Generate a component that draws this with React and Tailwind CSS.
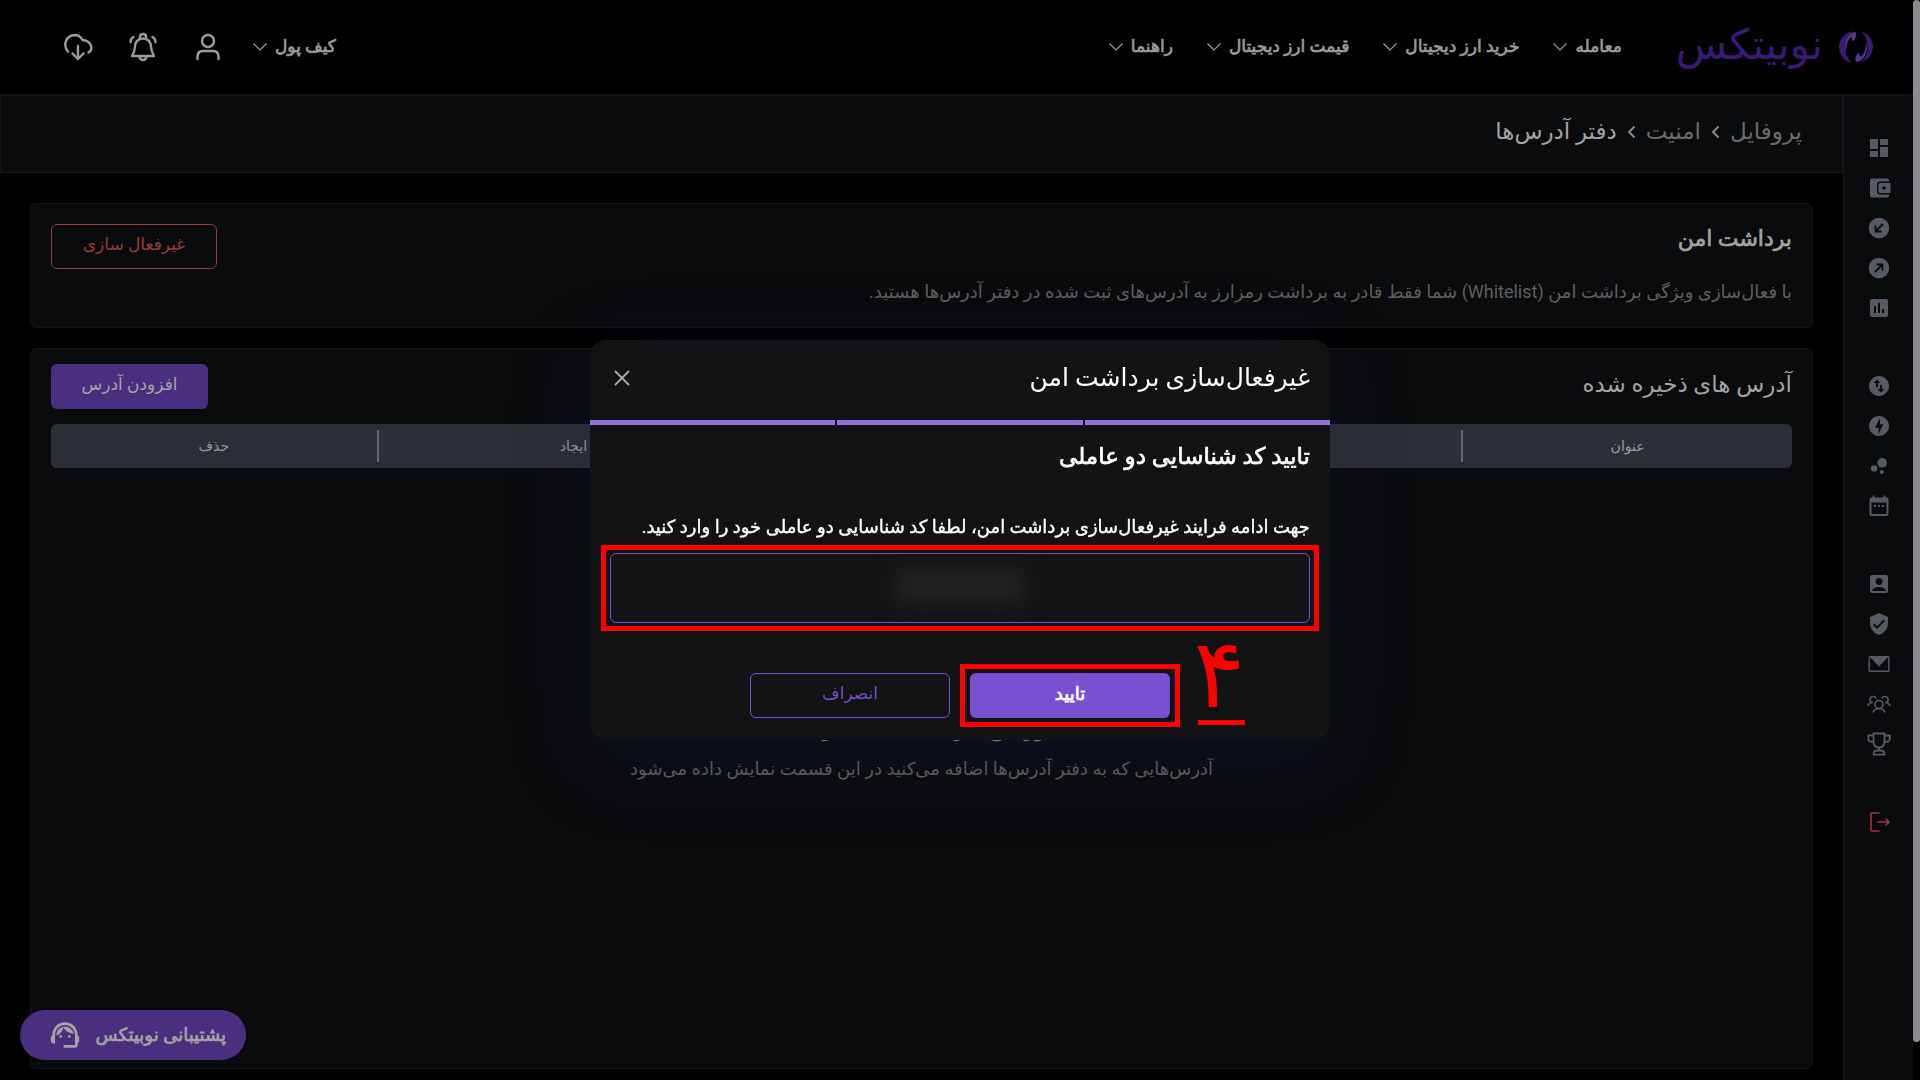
import React from 'react';
import {
  MdDashboard,
  MdAssessment,
  MdSwapVerticalCircle,
  MdOfflineBolt,
  MdBubbleChart,
  MdAccountBox,
  MdVerifiedUser,
  MdSupportAgent,
} from 'react-icons/md';

const menuItems = ['معامله', 'خرید ارز دیجیتال', 'قیمت ارز دیجیتال', 'راهنما'];

const columns = [
  { label: 'عنوان', width: 'w-[19%]' },
  { label: 'آدرس', width: 'w-[19%]' },
  { label: 'شبکه', width: 'w-[19%]' },
  { label: 'تاریخ ایجاد', width: 'w-[24.3%]' },
  { label: 'حذف', width: 'w-[18.7%]' },
];

const Chevron = () => (
  <svg width="14" height="8" viewBox="0 0 14 8" fill="none" stroke="currentColor" strokeWidth="1.2">
    <path d="M0.5 0.5L7 7L13.5 0.5" />
  </svg>
);

const Crumb = () => (
  <svg width="9" height="14" viewBox="0 0 9 14" fill="none" stroke="#8f8f8f" strokeWidth="1.8">
    <path d="M7.500 1.500L2 7L7.500 12.500" />
  </svg>
);

const LogoMark = () => (
  <svg width="34" height="32" viewBox="0 0 34 32">
    <path d="M14 0C5 2 0 9 0 16c0 7 5 14 13 16C8 27 6 22 6 16C6 9 9 4 14 0Z" fill="#391a76" />
    <path d="M22 0c8 3 12 9 12 16c0 7-5 13-12 15.500C27 27 28.500 22 28.500 16C28.500 9 26 4 22 0Z" fill="#391a76" />
    <path d="M6.500 22C4.500 10 9 1 16.500 1c1.500 4-.5 8-3 9.500c0-2-.5-4-2-4C8.500 9 7 15 6.500 22Z" fill="#573794" />
    <path d="M27.500 10c2 12-3 21-10.500 21c-1.500-4 .5-8 3-9.500c0 2 .5 4 2 4C25.500 23 27 17 27.500 10Z" fill="#573794" />
  </svg>
);

const CloudIcon = () => (
  <svg width="30" height="30" viewBox="0 0 30 30" fill="none" stroke="currentColor" strokeWidth="2.400" strokeLinecap="round" strokeLinejoin="round">
    <path d="M5 19.500C-0.500 13 3 3.500 11.500 3c4 0 6.500 2 8 5C28 8.500 31 17 25.500 20.500" />
    <path d="M15 14v13M9.500 21.500L15 27l5.500-5.500" />
  </svg>
);

const BellIcon = () => (
  <svg width="30" height="30" viewBox="0 0 30 30" fill="none" stroke="currentColor" strokeWidth="2.400" strokeLinecap="round" strokeLinejoin="round">
    <path d="M15 6.500c-5 0-8 3.500-8 8c0 4-1 6-3 9.500h22c-2-3.500-3-5.500-3-9.500c0-4.500-3-8-8-8Z" />
    <path d="M12 7V5c0-4 6-4 6 0v2M11.500 25c1 4 6 4 7 0M2.500 10c0-2.500 1-4 3-5M27.500 10c0-2.500-1-4-3-5" />
  </svg>
);

const UserIcon = () => (
  <svg width="30" height="30" viewBox="0 0 30 30" fill="none" stroke="currentColor" strokeWidth="2.500" strokeLinecap="round">
    <circle cx="15" cy="9" r="6" />
    <path d="M4.500 27v-2c0-4 2-6 5.500-6h10c3.500 0 5.500 2 5.500 6v2" />
  </svg>
);

const WalletIcon = () => (
  <svg width="24" height="24" viewBox="0 0 24 24" fill="currentColor">
    <path d="M5 2.500h15a2 2 0 0 1 2 2v1h-9a3 3 0 0 0-3 3v7a3 3 0 0 0 3 3h9v1a2 2 0 0 1-2 2H5a2 2 0 0 1-2-2v-15a2 2 0 0 1 2-2Z" />
    <path fillRule="evenodd" d="M13 7h10.500v10H13a1.500 1.500 0 0 1-1.500-1.500v-7A1.500 1.500 0 0 1 13 7Zm4 3.300a1.700 1.700 0 1 0 0 3.400a1.700 1.700 0 0 0 0-3.400Z" />
  </svg>
);

const DepositIcon = () => (
  <svg width="24" height="24" viewBox="0 0 24 24">
    <circle cx="12" cy="12" r="10.300" fill="currentColor" />
    <path d="M16 8l-7 7M8.500 9.500v6h6" fill="none" stroke="#0a0b0d" strokeWidth="1.800" />
  </svg>
);

const WithdrawIcon = () => (
  <svg width="24" height="24" viewBox="0 0 24 24">
    <circle cx="12" cy="12" r="10.300" fill="currentColor" />
    <path d="M8 16l7-7M9.500 8.500h6v6" fill="none" stroke="#0a0b0d" strokeWidth="1.800" />
  </svg>
);

const CalendarIcon = () => (
  <svg width="24" height="24" viewBox="0 0 24 24" fill="currentColor">
    <path fillRule="evenodd" d="M5.500 1.500h2v2h9v-2h2v2h1a2 2 0 0 1 2 2V20a2 2 0 0 1-2 2h-15a2 2 0 0 1-2-2V5.500a2 2 0 0 1 2-2h1Zm-1 7V20h15V8.500Z" />
    <path d="M7 11h2v2H7zM11 11h2v2h-2zM15 11h2v2h-2z" />
  </svg>
);

const MailIcon = () => (
  <svg width="24" height="24" viewBox="0 0 24 24">
    <rect x="2.200" y="4.700" width="19.600" height="14.600" rx="0.800" fill="none" stroke="currentColor" strokeWidth="1.400" />
    <path d="M3 5h18l-9 9.500Z" fill="currentColor" />
  </svg>
);

const GroupIcon = () => (
  <svg width="24" height="24" viewBox="0 0 24 24" fill="none" stroke="currentColor" strokeWidth="1.600">
    <circle cx="12" cy="12.500" r="4" />
    <path d="M6 20.500c1-3 3-4 6-4s5 1 6 4" />
    <path d="M4.500 10.500a3.200 3.200 0 1 1 4.500-4M1 14c.5-2 2-3.500 5-3.500M19.500 10.500a3.200 3.200 0 1 0-4.500-4M23 14c-.5-2-2-3.500-5-3.500" />
  </svg>
);

const TrophyIcon = () => (
  <svg width="24" height="24" viewBox="0 0 24 24" fill="none" stroke="currentColor" strokeWidth="1.800">
    <path d="M6.500 1.500h11V9c0 4-2 6.500-5.500 6.500S6.500 13 6.500 9Z" />
    <path d="M6.500 3.500H1.300V7c0 2 1.500 3 5.500 3M17.500 3.500h5.200V7c0 2-1.500 3-5.500 3M12 15.500V18M6.500 22.700c0-3 1.500-4.200 3.500-4.200h4c2 0 3.500 1.200 3.500 4.200Z" />
  </svg>
);

const LogoutIcon = () => (
  <svg width="24" height="24" viewBox="0 0 24 24" fill="none" stroke="currentColor" strokeWidth="1.600">
    <path d="M12.500 3H5.500A1.500 1.500 0 0 0 4 4.500v15A1.500 1.500 0 0 0 5.500 21H12.500M10.500 12h11.500M18.500 8.500l3.500 3.500l-3.500 3.500" />
  </svg>
);

const sideGroups = [
  [
    { name: 'داشبورد', icon: <MdDashboard size={24} /> },
    { name: 'کیف پول', icon: <WalletIcon /> },
    { name: 'واریز', icon: <DepositIcon /> },
    { name: 'برداشت', icon: <WithdrawIcon /> },
    { name: 'گزارش', icon: <MdAssessment size={24} /> },
  ],
  [
    { name: 'تبدیل', icon: <MdSwapVerticalCircle size={24} /> },
    { name: 'معامله سریع', icon: <MdOfflineBolt size={24} /> },
    { name: 'استیکینگ', icon: <MdBubbleChart size={24} /> },
    { name: 'تقویم', icon: <CalendarIcon /> },
  ],
  [
    { name: 'پروفایل', icon: <MdAccountBox size={24} /> },
    { name: 'امنیت', icon: <MdVerifiedUser size={24} /> },
    { name: 'پیام‌ها', icon: <MailIcon /> },
    { name: 'دعوت دوستان', icon: <GroupIcon /> },
    { name: 'جوایز', icon: <TrophyIcon /> },
  ],
];

const Header = () => (
  <header className="flex h-24 items-center justify-between border-b-2 border-[#12161b] pr-10 pb-px pl-[63px] text-[#9b9b9b]">
    <div className="flex items-center gap-[54px]">
      <a href="#" className="flex items-center gap-4">
        <LogoMark />
        <span className="pb-1 text-[42px] leading-[56px] text-[#391a76]">نوبیتکس</span>
      </a>
      <nav className="flex items-center gap-[34px]">
        {menuItems.map((item) => (
          <a key={item} href="#" className="flex items-center gap-2 text-[17px] [-webkit-text-stroke:0.7px]">
            {item}
            <Chevron />
          </a>
        ))}
      </nav>
    </div>
    <div className="flex items-center gap-[30px]">
      <a href="#" className="flex items-center gap-2 text-[17px] [-webkit-text-stroke:0.7px]">
        کیف پول
        <Chevron />
      </a>
      <div className="flex items-center gap-[35px]">
        <button type="button" aria-label="حساب کاربری"><UserIcon /></button>
        <button type="button" aria-label="اعلان‌ها"><BellIcon /></button>
        <button type="button" aria-label="دانلود"><CloudIcon /></button>
      </div>
    </div>
  </header>
);

const Sidebar = () => (
  <aside className="flex w-[70px] shrink-0 flex-col items-center gap-[54px] border-l border-[#1a1b20] bg-[#0a0b0d] pt-10 text-[#565a63]">
    {sideGroups.map((group, i) => (
      <ul key={i} className="flex flex-col gap-4">
        {group.map((entry) => (
          <li key={entry.name}>
            <a href="#" aria-label={entry.name}>{entry.icon}</a>
          </li>
        ))}
      </ul>
    ))}
    <a href="#" aria-label="خروج" className="text-[#993440]"><LogoutIcon /></a>
  </aside>
);

const TwoFactorModal = () => (
  <div className="fixed inset-0 flex items-center justify-center">
    <div role="dialog" aria-modal="true" className="relative w-[740px] rounded-2xl bg-[#121314] shadow-[0_20px_80px_0_rgba(30,36,80,0.3)] text-white">
      <div className="flex h-20 items-center justify-between px-5 pb-1">
        <h2 className="text-[25px]">غیرفعال‌سازی برداشت امن</h2>
        <button type="button" aria-label="بستن" className="px-1 text-[#b0b0b0]">
          <svg width="16" height="16" viewBox="0 0 16 16" fill="none" stroke="currentColor" strokeWidth="1.800">
            <path d="M1 1L15 15M15 1L1 15" />
          </svg>
        </button>
      </div>
      <div className="grid grid-cols-3 gap-[2px]">
        <span className="h-[5px] bg-[#9370db]" />
        <span className="h-[5px] bg-[#9370db]" />
        <span className="h-[5px] bg-[#9370db]" />
      </div>
      <form className="px-5 pt-4 pb-[22px]">
        <h3 className="text-[23px] leading-8 [-webkit-text-stroke:0.7px]">تایید کد شناسایی دو عاملی</h3>
        <label htmlFor="otp" className="mt-10 block text-[18px] leading-7 whitespace-nowrap [-webkit-text-stroke:0.4px]">
          جهت ادامه فرایند غیرفعال‌سازی برداشت امن، لطفا کد شناسایی دو عاملی خود را وارد کنید.
        </label>
        <div className="relative mt-3">
          <input id="otp" type="text" className="block h-[70px] w-full rounded-md border border-[#7950d2] bg-transparent text-center outline-none" />
          <span className="pointer-events-none absolute top-4 bottom-5 left-1/2 w-32 -translate-x-1/2 rounded-md bg-[#242526] blur-md" />
          <span className="pointer-events-none absolute -inset-x-[9px] -inset-y-2 border-[5px] border-[#ff0000]" />
        </div>
        <div className="mt-[50px] flex justify-center gap-5">
          <div className="relative">
            <button type="button" className="h-[45px] w-[200px] rounded-md bg-[#7950d2] pb-1 text-[18px] [-webkit-text-stroke:0.7px]">تایید</button>
            <span className="pointer-events-none absolute -inset-x-[10px] -inset-y-[9px] border-[5px] border-[#ff0000]" />
            <span className="absolute right-[-75px] bottom-[-7px] w-[47px] border-b-[5px] border-[#ff0000] text-center text-[96px] leading-[92px] text-[#ff0000]">۴</span>
          </div>
          <button type="button" className="h-[45px] w-[200px] rounded-md border border-[#7950d2] pb-1 text-[17px] text-[#7950d2]">انصراف</button>
        </div>
      </form>
    </div>
  </div>
);

const App = () => {
  return (
    <div dir="rtl" className="flex min-h-screen bg-black font-[Roboto,'DejaVu_Sans',sans-serif]">
      <div className="w-[7px] shrink-0">
        <div className="h-[1042px] rounded-full bg-[#8b8c91]" />
      </div>
      <div className="flex min-w-0 grow flex-col">
        <Header />
        <div className="flex grow">
          <Sidebar />
          <main className="flex min-w-0 grow flex-col">
            <nav className="flex h-[77px] items-center gap-[10px] border border-t-0 border-[#15171a] bg-[#0a0b0d] px-10 pb-1 text-[23px] text-[#6b6b6b]">
              <a href="#">پروفایل</a>
              <Crumb />
              <a href="#">امنیت</a>
              <Crumb />
              <span className="text-[#a3a3a3]">دفتر آدرس‌ها</span>
            </nav>
            <div className="flex grow flex-col gap-5 px-[30px] pt-[30px] pb-[11px]">
              <section className="flex h-[125px] justify-between rounded-md border border-[#141519] bg-[#0a0b0d] px-5 py-5">
                <div>
                  <h2 className="text-[22px] leading-[30px] text-[#a3a3a3] [-webkit-text-stroke:0.7px]">برداشت امن</h2>
                  <p className="mt-6 text-[18px] leading-7 text-[#5f5f5f]">
                    با فعال‌سازی ویژگی برداشت امن (Whitelist) شما فقط قادر به برداشت رمزارز به آدرس‌های ثبت شده در دفتر آدرس‌ها هستید.
                  </p>
                </div>
                <button type="button" className="h-[45px] w-[166px] rounded-md border border-[#993a3d] pb-1 text-[17px] text-[#993a3d]">غیرفعال سازی</button>
              </section>
              <section className="flex grow flex-col rounded-md border border-[#141519] bg-[#0a0b0d] px-5 pt-[15px]">
                <div className="flex items-center justify-between">
                  <h2 className="pb-1 text-[23px] leading-8 text-[#a3a3a3]">آدرس های ذخیره شده</h2>
                  <button type="button" className="h-[45px] w-[157px] rounded-md bg-[#4a2f80] pb-1 text-[17px] text-[#a3a3a3]">افزودن آدرس</button>
                </div>
                <table className="mt-[15px] w-full table-fixed text-sm text-[#9b9b9b]">
                  <thead>
                    <tr className="h-11 bg-[#2d2f36]">
                      {columns.map((column) => (
                        <th key={column.label} className={`${column.width} group p-0 font-normal first:rounded-r-md last:rounded-l-md`}>
                          <div className="border-l-2 border-[#66676a] leading-8 group-last:border-l-0">{column.label}</div>
                        </th>
                      ))}
                    </tr>
                  </thead>
                </table>
                <div className="flex flex-col items-center gap-[10px] pt-[245px]">
                  <h3 className="text-[22px] leading-8 text-[#8a8a8a] [-webkit-text-stroke:0.7px]">هنوز هیچ آدرسی اضافه نکرده‌اید</h3>
                  <p className="text-[18px] leading-7 text-[#5f5f5f]">آدرس‌هایی که به دفتر آدرس‌ها اضافه می‌کنید در این قسمت نمایش داده می‌شود</p>
                </div>
              </section>
            </div>
          </main>
        </div>
      </div>
      <TwoFactorModal />
      <button type="button" className="fixed bottom-5 left-5 flex h-[50px] w-[226px] items-center justify-between rounded-full bg-[#4a2f80] pr-5 pb-px pl-7 text-[18px] text-[#a3a3a3] [-webkit-text-stroke:0.7px]">
        پشتیبانی نوبیتکس
        <MdSupportAgent size={34} stroke="none" />
      </button>
    </div>
  );
};

export default App;
